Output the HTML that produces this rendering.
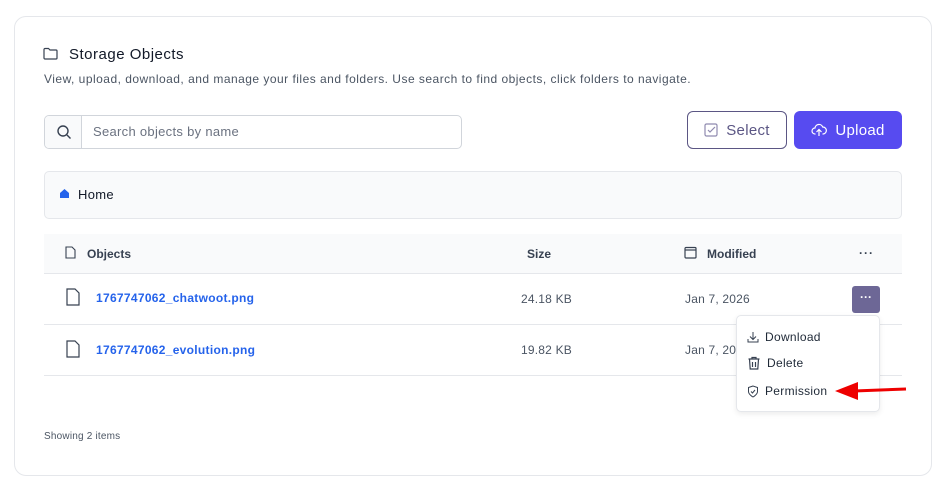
<!DOCTYPE html>
<html><head><style>
*{box-sizing:border-box;margin:0;padding:0}
body{width:942px;height:494px;background:#fff;font-family:"Liberation Sans",sans-serif;color:#1f2937;position:relative;overflow:hidden}
.card{position:absolute;left:14px;top:16px;width:918px;height:460px;border:1px solid #e5e7eb;border-radius:12px;background:#fff}
.a{position:absolute}
.t{font-size:15px;color:#111827;letter-spacing:0.5px}
.sub{font-size:12px;color:#4b5563;letter-spacing:0.48px}
.search{left:44px;top:115px;width:418px;height:34px;border:1px solid #d1d5db;border-radius:5px;overflow:hidden}
.search .ic{position:absolute;left:0;top:0;width:37px;height:32px;background:#f9fafb;border-right:1px solid #d1d5db}
.btn{border-radius:6px;font-size:15px;display:flex;align-items:center;justify-content:center;gap:8px;letter-spacing:0.3px}
.crumb{left:44px;top:171px;width:858px;height:48px;background:#f9fafb;border:1px solid #e5e7eb;border-radius:5px}
.th{left:44px;top:234px;width:858px;height:40px;background:#f9fafb;border-bottom:1px solid #e5e7eb}
.b{font-size:12px;font-weight:bold;color:#374151}
.line{left:44px;width:858px;height:1px;background:#e5e7eb}
.link{font-size:12px;font-weight:bold;color:#2563eb;letter-spacing:0.3px}
.cell{font-size:12px;color:#4b5563;letter-spacing:0.2px}
.menu{left:736px;top:315px;width:144px;height:97px;background:#fff;border:1px solid #e5e7eb;border-radius:5px;box-shadow:0 2px 6px rgba(0,0,0,.08)}
.mi{position:absolute;left:10px;font-size:12px;color:#1f2937;display:flex;align-items:center;gap:6px;letter-spacing:0.3px}
</style></head><body>
<div class="card"></div>
<svg class="a" style="left:43px;top:47px" width="15" height="13" viewBox="0 0 15 13"><path d="M1 2.5a1 1 0 0 1 1-1h3.5l1.5 1.5h6a1 1 0 0 1 1 1v7a1 1 0 0 1-1 1h-11a1 1 0 0 1-1-1z" fill="none" stroke="#374151" stroke-width="1.2"/></svg>
<div class="a t" style="left:69px;top:46px">Storage Objects</div>
<div class="a sub" style="left:44px;top:72px">View, upload, download, and manage your files and folders. Use search to find objects, click folders to navigate.</div>
<div class="a search"><div class="ic"><svg style="position:absolute;left:11px;top:8px" width="16" height="16" viewBox="0 0 16 16"><circle cx="7" cy="7" r="5" fill="none" stroke="#374151" stroke-width="1.4"/><path d="M11 11l3.5 3.5" stroke="#374151" stroke-width="1.4"/></svg></div>
<div style="position:absolute;left:48px;top:8px;font-size:13px;color:#6b7280;letter-spacing:0.3px">Search objects by name</div></div>
<div class="a btn" style="left:687px;top:111px;width:100px;height:38px;border:1px solid #5b5684;color:#5b5684"><svg width="14" height="14" viewBox="0 0 14 14"><rect x="1" y="1" width="12" height="12" rx="1.5" fill="none" stroke="#8f8aaf" stroke-width="1.2"/><path d="M4 7l2 2 5-5" fill="none" stroke="#8f8aaf" stroke-width="1.2"/></svg>Select</div>
<div class="a btn" style="left:794px;top:111px;width:108px;height:38px;background:#574bf0;color:#fff"><svg width="16" height="14" viewBox="0 0 16 14"><path d="M4.5 11H4a3 3 0 0 1 0-6 4 4 0 0 1 7.7-1A3 3 0 0 1 12 11h-.5M8 13V6.5M5.5 9L8 6.5 10.5 9" fill="none" stroke="#fff" stroke-width="1.2"/></svg>Upload</div>
<div class="a crumb"></div>
<svg class="a" style="left:59px;top:188px" width="11" height="11" viewBox="0 0 11 11"><path d="M5.5 1L1 5v5h9V5z" fill="#2563eb"/></svg>
<div class="a" style="left:78px;top:187px;font-size:13px;color:#111827;letter-spacing:0.3px">Home</div>
<div class="a th"></div>
<svg class="a" style="left:65px;top:246px" width="11" height="13" viewBox="0 0 11 13"><path d="M1 1h6l3 3v8H1z" fill="none" stroke="#374151" stroke-width="1.1"/></svg>
<div class="a b" style="left:87px;top:247px">Objects</div>
<div class="a b" style="left:527px;top:247px">Size</div>
<svg class="a" style="left:684px;top:246px" width="13" height="13" viewBox="0 0 13 13"><rect x="1" y="1.5" width="11" height="10.5" rx="1" fill="none" stroke="#374151" stroke-width="1.2"/><path d="M1 4h11" stroke="#374151" stroke-width="1.2"/></svg>
<div class="a b" style="left:707px;top:247px">Modified</div>
<div class="a b" style="left:859px;top:246px;letter-spacing:1px">···</div>
<svg class="a" style="left:66px;top:288px" width="14" height="18" viewBox="0 0 14 18"><path d="M1 1h8l4 4v12H1z" fill="none" stroke="#374151" stroke-width="1.2"/></svg>
<div class="a link" style="left:96px;top:291px">1767747062_chatwoot.png</div>
<div class="a cell" style="left:521px;top:292px">24.18 KB</div>
<div class="a cell" style="left:685px;top:292px">Jan 7, 2026</div>
<div class="a" style="left:852px;top:286px;width:28px;height:27px;background:#6d6796;border-radius:3px;color:#fff;font-size:12px;text-align:center;line-height:22px;font-weight:bold">···</div>
<div class="a line" style="top:324px"></div>
<svg class="a" style="left:66px;top:340px" width="14" height="18" viewBox="0 0 14 18"><path d="M1 1h8l4 4v12H1z" fill="none" stroke="#374151" stroke-width="1.2"/></svg>
<div class="a link" style="left:96px;top:343px">1767747062_evolution.png</div>
<div class="a cell" style="left:521px;top:343px">19.82 KB</div>
<div class="a cell" style="left:685px;top:343px">Jan 7, 2026</div>
<div class="a line" style="top:375px"></div>
<div class="a menu">
<div class="mi" style="top:14px"><svg width="12" height="12" viewBox="0 0 12 12"><path d="M6 1v7M3 5.5L6 8.5 9 5.5M1 8v3h10V8" fill="none" stroke="#374151" stroke-width="1"/></svg>Download</div>
<div class="mi" style="top:40px"><svg width="14" height="14" viewBox="0 0 14 14"><path d="M1.5 3h11M5 3V1.5h4V3M2.5 3l.7 10h7.6l.7-10M5.5 6v5M8.5 6v5" fill="none" stroke="#374151" stroke-width="1.2"/></svg>Delete</div>
<div class="mi" style="top:68px"><svg width="12" height="13" viewBox="0 0 12 13"><path d="M6 1L1.5 2.5v4C1.5 9.5 6 12 6 12s4.5-2.5 4.5-5.5v-4z M4 6.5l1.5 1.5 2.5-3" fill="none" stroke="#374151" stroke-width="1"/></svg>Permission</div>
</div>
<svg class="a" style="left:834px;top:380px" width="74" height="22" viewBox="0 0 74 22"><path d="M20 11L72 9" stroke="#ee0000" stroke-width="3"/><path d="M1 11L24 2v18z" fill="#ee0000"/></svg>
<div class="a" style="left:44px;top:431px;font-size:10px;color:#4b5563;letter-spacing:0.2px">Showing 2 items</div>
</body></html>
